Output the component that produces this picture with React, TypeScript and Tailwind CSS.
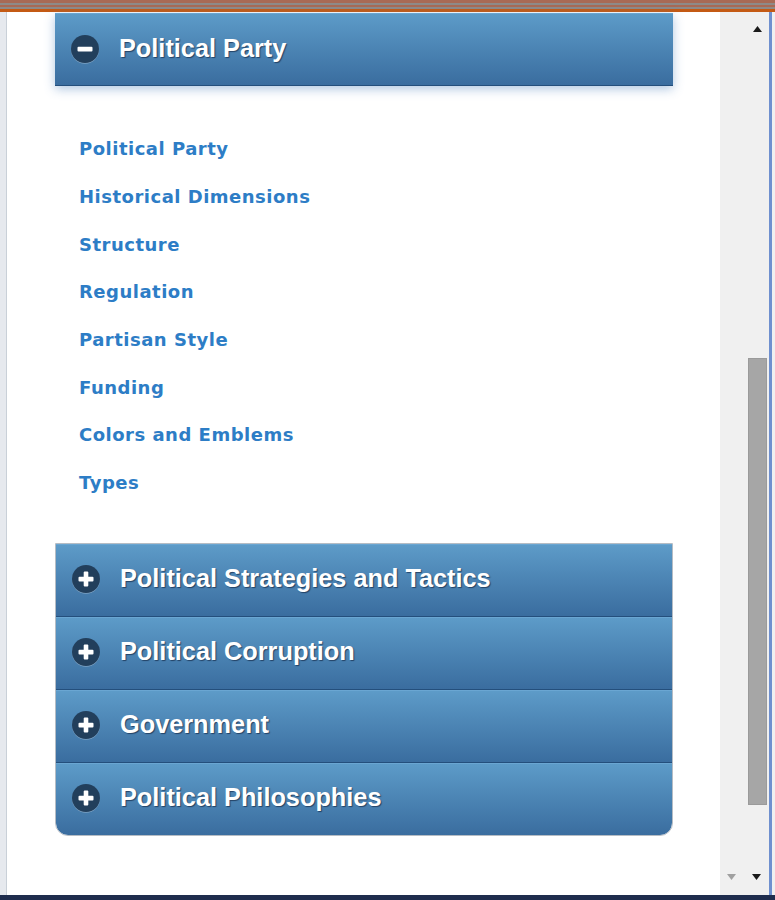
import React, { useState } from 'react';

const sections = [
  'Political Strategies and Tactics',
  'Political Corruption',
  'Government',
  'Political Philosophies',
];

const links = [
  'Political Party',
  'Historical Dimensions',
  'Structure',
  'Regulation',
  'Partisan Style',
  'Funding',
  'Colors and Emblems',
  'Types',
];

function ToggleIcon({ open }: { open: boolean }) {
  return (
    <svg width="30" height="30" viewBox="0 0 30 30" className="shrink-0">
      <circle cx="15" cy="15.8" r="14" fill="#7fa3c4" />
      <circle cx="15" cy="15" r="14" fill="#223f5c" />
      <rect x="7.5" y="12.8" width="15" height="4.6" rx="1" fill="#ffffff" />
      {!open && <rect x="12.7" y="7.5" width="4.6" height="15" rx="1" fill="#ffffff" />}
    </svg>
  );
}

function Bar({ title, open, onClick, last }: { title: string; open: boolean; onClick: () => void; last?: boolean }) {
  return (
    <button
      onClick={onClick}
      className={`flex items-center w-full pl-[15px] pb-[2px] gap-[19px] text-left bg-gradient-to-b from-[#5d9bc8] to-[#3a6d9f] border-t border-t-[#6aa6d2] ${last ? 'h-[72px] rounded-b-[12px]' : 'h-[73px] border-b border-b-[#244f7c]'}`}
    >
      <ToggleIcon open={open} />
      <span className="text-white font-bold text-[25.3px] leading-none [text-shadow:1px_1px_1px_rgba(20,40,70,0.7)]" style={{ fontFamily: "'Liberation Sans', Arial, sans-serif" }}>
        {title}
      </span>
    </button>
  );
}

export default function App() {
  const [open, setOpen] = useState<string | null>('Political Party');

  return (
    <div className="w-[775px] h-[900px] flex flex-col overflow-hidden bg-white">
      <div className="h-[12px] shrink-0 flex flex-col">
        <div className="h-[3px] bg-[#a86a55]" />
        <div className="h-[2px] bg-[#8e8a88]" />
        <div className="h-[2px] bg-[#a86a55]" />
        <div className="h-[2px] bg-[#8e8a88]" />
        <div className="h-[3px] bg-[#c45a14]" />
      </div>

      <div className="flex flex-1 min-h-0">
        <div className="w-[7px] bg-[#e6e9ee] border-r border-r-[#c9d0d8]" />

        <div className="flex-1 pl-[48px] pt-[1px]">
          <div className="w-[618px]">
            <div className="shadow-[0_3px_10px_rgba(80,130,190,0.45)]">
              <Bar title="Political Party" open={open === 'Political Party'} onClick={() => setOpen(open === 'Political Party' ? null : 'Political Party')} last={false} />
            </div>

            <ul className="pt-[39px] pb-[36px] pl-[24px]" style={{ fontFamily: "'DejaVu Sans', Verdana, sans-serif" }}>
              {links.map(l => (
                <li key={l} className="h-[47.7px] flex items-center">
                  <a href="#" className="text-[#2d7dc6] font-bold text-[18px] tracking-[0.5px]">{l}</a>
                </li>
              ))}
            </ul>

            <div className="border border-[#b5bcc4] rounded-b-[13px] overflow-hidden">
              {sections.map((s, i) => (
                <Bar key={s} title={s} open={open === s} onClick={() => setOpen(open === s ? null : s)} last={i === sections.length - 1} />
              ))}
            </div>
          </div>
        </div>

        <div className="w-[49px] bg-[#f0f0f0] relative flex flex-col items-end pr-[2px]">
          <div className="h-[30px] w-[20px] flex items-center justify-center pt-[4px]">
            <svg width="9" height="6" viewBox="0 0 9 6"><path d="M4.5 0L9 6H0Z" fill="#1a1a1a" /></svg>
          </div>
          <div className="mt-[316px] h-[447px] w-[19px] bg-[#a6a6a6] border border-[#9a9a9a]" />
          <div className="flex-1" />
          <div className="h-[30px] w-full flex items-center justify-end gap-[16px] pr-[6px] pb-[6px]">
            <svg width="9" height="6" viewBox="0 0 9 6"><path d="M0 0H9L4.5 6Z" fill="#a0a0a0" /></svg>
            <svg width="9" height="6" viewBox="0 0 9 6"><path d="M0 0H9L4.5 6Z" fill="#1a1a1a" /></svg>
          </div>
        </div>

        <div className="w-[6px] bg-[#f0f0f0] border-l-[3px] border-l-[#6f90cf]" />
      </div>

      <div className="h-[5px] shrink-0 bg-[#1f2d4d]" />
    </div>
  );
}
